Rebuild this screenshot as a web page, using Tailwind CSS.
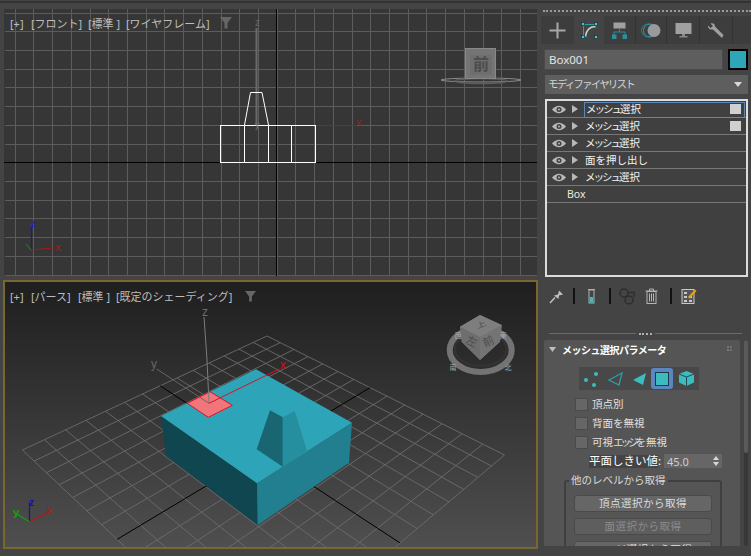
<!DOCTYPE html>
<html lang="ja">
<head>
<meta charset="utf-8">
<script src="https://cdn.jsdelivr.net/npm/@tailwindcss/browser@4"></script>
</head>
<body class="bg-[#444444] overflow-hidden">
<div class="w-[751px] h-[556px] flex flex-col overflow-hidden font-['Noto_Sans','Noto_Sans_CJK_JP',sans-serif]">
  <div class="h-[9px] shrink-0 pt-px"><div class="h-[2px] bg-[#333333]"></div></div>
  <div class="flex flex-1 min-h-0">
    <!-- viewports -->
    <div class="w-[537px] shrink-0 flex flex-col">
      <div class="relative ml-[4px] w-[533px] h-[267px] bg-[#363636] overflow-hidden">
        <svg class="absolute inset-0" width="533" height="267" viewBox="4 9 533 267">
          <g id="frontgrid" stroke="#5c5c5c" stroke-width="1"></g>
          <line x1="4" y1="162.5" x2="537" y2="162.5" stroke="#000"/>
          <line x1="276.5" y1="9" x2="276.5" y2="276" stroke="#000"/>
          <line x1="256.5" y1="28" x2="256.5" y2="125" stroke="#6a6a6a" stroke-width="2"/>
          <line x1="257" y1="125.5" x2="357" y2="125.5" stroke="#8c2326" stroke-width="1"/>
          <g fill="none" stroke="#ffffff" stroke-width="1">
            <rect x="220.5" y="125.5" width="95" height="37"/>
            <line x1="244.5" y1="125" x2="244.5" y2="162"/>
            <line x1="268.5" y1="125" x2="268.5" y2="162"/>
            <line x1="291.5" y1="125" x2="291.5" y2="162"/>
            <polyline points="244.5,125 250.5,92.5 262,92.5 268.5,125"/>
          </g>
          <text x="255" y="26" font-size="10" fill="#666" font-family="Liberation Sans">z</text>
          <text x="356" y="126" font-size="11" fill="#8c2326" font-family="Liberation Sans">x</text>
          <text x="255" y="128" font-size="9" fill="#777" font-family="Liberation Sans">y</text>
          <!-- axis tripod -->
          <line x1="31.5" y1="250" x2="31.5" y2="227" stroke="#1818a8" stroke-width="1.200"/>
          <line x1="31" y1="250" x2="53" y2="248" stroke="#a01c1c" stroke-width="1.200"/>
          <line x1="31" y1="250" x2="26" y2="244" stroke="#1f8a1f"/>
          <text x="30" y="227" font-size="11" font-weight="700" fill="#2424c0" font-family="Liberation Sans">z</text>
          <text x="55" y="251" font-size="11" fill="#a01c1c" font-family="Liberation Sans">x</text>
          <!-- view cube -->
          <ellipse cx="481" cy="80" rx="40" ry="2" fill="none" stroke="#8c8c8c" stroke-width="1"/>
          <ellipse cx="481" cy="81" rx="26" ry="2.5" fill="none" stroke="#5c5c5c" stroke-width="1.5"/>
          <rect x="465.500" y="48.500" width="30" height="30" fill="#757575" stroke="#888"/>
          <rect x="470" y="55" width="22" height="20" fill="#6e6e6e"/>
          <text x="481" y="70" text-anchor="middle" font-size="16" font-weight="700" fill="#4c4c4c" font-family="Noto Sans CJK JP">前</text>
        </svg>
        <div class="absolute left-[6px] top-[8px] h-[12px] flex items-center text-[11px] leading-none text-[#bdbdbd] whitespace-nowrap">
          <span class="w-[21px]">[+]</span>
          <span class="w-[57px]">[フロント]</span>
          <span class="w-[38px]">[標準 ]</span>
          <span class="w-[94px]">[ワイヤフレーム]</span>
          <svg width="12" height="12" viewBox="0 0 12 12"><path d="M0 0H12L7.500 6V11.500H4.500V6Z" fill="#666"/></svg>
        </div>
      </div>
      <div class="relative mt-[4px] ml-[3px] w-[535px] h-[269px] border-2 border-[#796730] bg-linear-to-b from-[#1f1f1f] to-[#4f4f4f] overflow-hidden">
        <svg class="absolute left-0 top-0" width="531" height="265" viewBox="5 282 531 265">
          <g id="persp" fill="none" stroke="#6c6c6c" stroke-width="0.900"></g>
          <g id="perspaxis" fill="none" stroke="#000" stroke-width="1"></g>
          <!-- box -->
          <polygon points="161,416 166,456 257.700,525 257,483.300" fill="#0f4650"/>
          <polygon points="257,483.300 257.700,525 349,462.700 352,422.700" fill="#217f8f"/>
          <polygon points="256,369.300 352,422.700 257,483.300 161,416" fill="#2ea4b8"/>
          <polygon points="282.700,466.700 307.300,451.700 294.700,411 282.700,417.300" fill="#268f9f"/>
          <polygon points="256.700,449.300 270,410.300 282.700,417.300 282.700,466.700" fill="#196572"/>
          <polygon points="187.300,403.300 210,391.700 232.300,405.300 208.300,417.300" fill="#f0767c" stroke="#e0101f" stroke-width="1"/>
          <!-- gizmo -->
          <polyline points="209,403.300 207,360 204,317" fill="none" stroke="#7c7c7c"/>
          <line x1="209" y1="403.300" x2="156.700" y2="369" stroke="#666"/>
          <line x1="209" y1="403.300" x2="279.300" y2="369" stroke="#e0101f"/>
          <text x="202" y="316" font-size="12" fill="#6e6e6e" font-family="Liberation Sans">z</text>
          <text x="151" y="368" font-size="12" fill="#666" font-family="Liberation Sans">y</text>
          <text x="280" y="369" font-size="12" fill="#c8141e" font-family="Liberation Sans">x</text>
          <!-- axis tripod -->
          <line x1="29.500" y1="521.700" x2="29.500" y2="502" stroke="#1212b4" stroke-width="1.200"/>
          <line x1="29.500" y1="521.700" x2="49" y2="511.700" stroke="#b81616" stroke-width="1.200"/>
          <line x1="29.500" y1="521.700" x2="17" y2="514" stroke="#12a012" stroke-width="1.200"/>
          <text x="29" y="506" font-size="10" font-weight="700" fill="#1212b4" font-family="Liberation Sans">z</text>
          <text x="47" y="514" font-size="11" fill="#b81616" font-family="Liberation Sans">x</text>
          <text x="13" y="516" font-size="11" font-weight="700" fill="#12a012" font-family="Liberation Sans">y</text>
          <!-- view cube -->
          <ellipse cx="480.700" cy="350" rx="31" ry="22" fill="none" stroke="#737373" stroke-width="6"/>
          <ellipse cx="480.700" cy="349" rx="26" ry="17" fill="none" stroke="#333" stroke-width="2.500"/>
          <polygon points="480,315 501.700,325 500,341.700 480,360 461.700,341.700 460,326.700" fill="#757575"/>
          <polygon points="460,326.700 480,337 480,360 461.700,341.700" fill="#6e6e6e"/>
          <polygon points="501.700,325 480,337 480,360 500,341.700" fill="#747474"/>
          <polygon points="480,315 501.700,325 480,337 460,326.700" fill="#7e7e7e"/>
          <text transform="translate(482 327) rotate(-20) scale(1 .7)" text-anchor="middle" font-size="10" fill="#4a4a4a" font-family="Noto Sans CJK JP">上</text>
          <text transform="translate(470 345) rotate(25)" text-anchor="middle" font-size="11" fill="#4d4d4d" font-family="Noto Sans CJK JP">左</text>
          <text transform="translate(490 345) rotate(-25)" text-anchor="middle" font-size="11" fill="#4d4d4d" font-family="Noto Sans CJK JP">前</text>
          <g font-size="7" fill="#a8a8a8" font-family="Noto Sans CJK JP" text-anchor="middle">
            <text x="458" y="338">西</text>
            <text x="503" y="338">東</text>
            <text x="453" y="370">南</text>
            <text x="508" y="370">北</text>
          </g>
        </svg>
        <div class="absolute left-[5px] top-[8px] h-[12px] flex items-center text-[11px] leading-none text-[#bdbdbd] whitespace-nowrap">
          <span class="w-[21px]">[+]</span>
          <span class="w-[47px]">[パース]</span>
          <span class="w-[38px]">[標準 ]</span>
          <span class="w-[129px]">[既定のシェーディング]</span>
          <svg width="11" height="11" viewBox="0 0 12 12"><path d="M0 0H12L7.500 6V11.500H4.500V6Z" fill="#666"/></svg>
        </div>
      </div>
    </div>

    <!-- command panel -->
    <div class="w-[214px] shrink-0 flex flex-col">
      <div class="ml-[6px] mt-[1px] h-[2px] border-t-2 border-dotted border-[#9a9a9a]"></div>
      <div class="ml-[4px] mt-[4px] h-[28px] bg-[#3d3d3d] flex">
        <div class="w-[33px] flex items-center justify-center">
          <svg width="17" height="17" viewBox="0 0 17 17"><path d="M8.500 0.500V16.500M0.500 8.500H16.500" stroke="#a8a8a8" stroke-width="2"/></svg>
        </div>
        <div class="w-[30px] bg-[#444444] flex items-center justify-center">
          <svg width="17" height="17" viewBox="0 0 17 17"><path d="M2.500 2.500H14.500M2.500 2.500V14.500M2.500 14.500H6M14.500 2.500V6" stroke="#2f9aa8" fill="none"/><path d="M4.500 14Q6 5 14 4.500" stroke="#d0d0d0" fill="none" stroke-width="1.500"/><g fill="#44c4cc" stroke="#111" stroke-width=".5"><rect x=".5" y=".5" width="3" height="3"/><rect x="13.500" y=".5" width="3" height="3"/><rect x=".5" y="13.500" width="3" height="3"/><rect x="13.500" y="13.500" width="3" height="3"/></g></svg>
        </div>
        <div class="w-[32px] flex items-center justify-center border-r border-[#333333]">
          <svg width="15" height="17" viewBox="0 0 15 17"><rect x="1.500" y="0.500" width="12" height="6" fill="#a0a0a0"/><path d="M7.500 7V10M2 14V10H13V14" fill="none" stroke="#2b8f9c"/><rect x="0" y="12.500" width="4.500" height="4.500" fill="#2b8f9c"/><rect x="10.500" y="12.500" width="4.500" height="4.500" fill="#2b8f9c"/></svg>
        </div>
        <div class="w-[31px] flex items-center justify-center border-r border-[#333333]">
          <svg width="20" height="15" viewBox="0 0 20 15"><circle cx="7" cy="7.500" r="6.500" fill="none" stroke="#2f7f8a"/><circle cx="9" cy="7.500" r="6.500" fill="none" stroke="#2f9aa8"/><circle cx="13" cy="7.500" r="6.500" fill="#9a9a9a"/></svg>
        </div>
        <div class="w-[33px] flex items-center justify-center border-r border-[#333333]">
          <svg width="17" height="15" viewBox="0 0 17 15"><rect x="0.500" y="0" width="16" height="11" fill="#a0a0a0"/><rect x="7" y="11" width="3" height="2" fill="#8a8a8a"/><rect x="4.500" y="13" width="8" height="1.500" fill="#8a8a8a"/></svg>
        </div>
        <div class="w-[33px] flex items-center justify-center border-r border-[#333333]">
          <svg width="18" height="17" viewBox="0 0 18 17"><path d="M1 3.500L3.500 6 6 4 3.500 1.500C5.500 .5 8 1.500 8 4.500L16.500 13 15 16 6 7.500C3 8 .5 6 1 3.500Z" fill="#a0a0a0"/></svg>
        </div>
      </div>
      <div class="ml-[7px] mt-[5px] flex">
        <div class="w-[179px] h-[21px] bg-[#5e5e5e] border border-[#4a4a4a] flex items-center pl-[4px] text-[11.500px] leading-none text-[#e4e4e4]">Box001</div>
        <div class="ml-[5px] w-[20px] h-[21px] bg-[#2ea6ba] border-2 border-black"></div>
      </div>
      <div class="ml-[8px] mt-[5px] w-[203px] h-[19px] bg-[#5e5e5e] flex items-center pl-[3px] pr-[6px] justify-between text-[10.500px] leading-none text-[#d4d4d4]">
        <span class="tracking-[-1.800px]">モディファイヤリスト</span>
        <svg width="8" height="5" viewBox="0 0 8 5"><path d="M0 0H8L4 5Z" fill="#d8d8d8"/></svg>
      </div>
      <div class="ml-[8px] mt-[5px] w-[203px] h-[178px] border-2 border-[#dcdcdc] bg-[#404040] text-[10.500px] leading-none text-[#f2f2f2]">
        <div class="relative h-[17px] border-b border-[#777777] flex items-center">
          <svg class="ml-[5px]" width="14" height="9" viewBox="0 0 14 9"><path d="M0 4.500Q7 -3 14 4.500Q7 12 0 4.500Z" fill="#b8b8b8"/><circle cx="7" cy="4.500" r="2.500" fill="#404040"/><circle cx="7" cy="4.500" r="1" fill="#b8b8b8"/></svg>
          <svg class="ml-[6px]" width="6" height="8" viewBox="0 0 6 8"><path d="M0 0L6 4L0 8Z" fill="#b8b8b8"/></svg>
          <span class="ml-[6px] h-[16px] flex-1 mr-[1px] mt-[1px] border border-[#5b87b5] flex items-center pl-px"><span class="tracking-[-2px]">メッシュ</span>選択</span>
          <span class="absolute left-[183px] top-[3px] w-[11px] h-[10px] bg-[#d0d0d0]"></span>
        </div>
        <div class="relative h-[17px] border-b border-[#777777] flex items-center">
          <svg class="ml-[5px]" width="14" height="9" viewBox="0 0 14 9"><path d="M0 4.500Q7 -3 14 4.500Q7 12 0 4.500Z" fill="#b8b8b8"/><circle cx="7" cy="4.500" r="2.500" fill="#404040"/><circle cx="7" cy="4.500" r="1" fill="#b8b8b8"/></svg>
          <svg class="ml-[6px]" width="6" height="8" viewBox="0 0 6 8"><path d="M0 0L6 4L0 8Z" fill="#b8b8b8"/></svg>
          <span class="ml-[7px]"><span class="tracking-[-2px]">メッシュ</span>選択</span>
          <span class="absolute left-[183px] top-[3px] w-[11px] h-[10px] bg-[#d0d0d0]"></span>
        </div>
        <div class="h-[17px] border-b border-[#777777] flex items-center">
          <svg class="ml-[5px]" width="14" height="9" viewBox="0 0 14 9"><path d="M0 4.500Q7 -3 14 4.500Q7 12 0 4.500Z" fill="#b8b8b8"/><circle cx="7" cy="4.500" r="2.500" fill="#404040"/><circle cx="7" cy="4.500" r="1" fill="#b8b8b8"/></svg>
          <svg class="ml-[6px]" width="6" height="8" viewBox="0 0 6 8"><path d="M0 0L6 4L0 8Z" fill="#b8b8b8"/></svg>
          <span class="ml-[7px]"><span class="tracking-[-2px]">メッシュ</span>選択</span>
        </div>
        <div class="h-[17px] border-b border-[#777777] flex items-center">
          <svg class="ml-[5px]" width="14" height="9" viewBox="0 0 14 9"><path d="M0 4.500Q7 -3 14 4.500Q7 12 0 4.500Z" fill="#b8b8b8"/><circle cx="7" cy="4.500" r="2.500" fill="#404040"/><circle cx="7" cy="4.500" r="1" fill="#b8b8b8"/></svg>
          <svg class="ml-[6px]" width="6" height="8" viewBox="0 0 6 8"><path d="M0 0L6 4L0 8Z" fill="#b8b8b8"/></svg>
          <span class="ml-[7px]">面を押し出し</span>
        </div>
        <div class="h-[17px] border-b border-[#777777] flex items-center">
          <svg class="ml-[5px]" width="14" height="9" viewBox="0 0 14 9"><path d="M0 4.500Q7 -3 14 4.500Q7 12 0 4.500Z" fill="#b8b8b8"/><circle cx="7" cy="4.500" r="2.500" fill="#404040"/><circle cx="7" cy="4.500" r="1" fill="#b8b8b8"/></svg>
          <svg class="ml-[6px]" width="6" height="8" viewBox="0 0 6 8"><path d="M0 0L6 4L0 8Z" fill="#b8b8b8"/></svg>
          <span class="ml-[7px]"><span class="tracking-[-2px]">メッシュ</span>選択</span>
        </div>
        <div class="h-[17px] border-b border-[#777777] flex items-center pl-[20px] text-[#f0ecd8]">Box</div>
      </div>
      <!-- toolbar -->
      <div class="ml-[12px] mt-[11px] h-[16px] flex items-center">
        <svg class="w-[15px]" width="15" height="15" viewBox="0 0 15 15"><path d="M1 14L6 8.500" stroke="#c0c0c0" stroke-width="1.500"/><path d="M5 6.500L9 5.500 10 1.500 14 5.500 10 6.500 9.500 10Z" fill="#c0c0c0"/></svg>
        <div class="ml-[9px] w-[2px] h-[16px] bg-[#111111]"></div>
        <svg class="ml-[13px]" width="7" height="15" viewBox="0 0 7 15"><rect x="1" y="1" width="5" height="13" fill="none" stroke="#b0b0b0"/><rect x="2" y="8" width="3" height="5.500" fill="#3dbcc0"/><path d="M0 .5H7" stroke="#b0b0b0"/></svg>
        <div class="ml-[14px] w-[2px] h-[16px] bg-[#111111]"></div>
        <svg class="ml-[8px]" width="16" height="17" viewBox="0 0 16 17"><g fill="none" stroke="#2e2e2e" stroke-width="1.500"><circle cx="5" cy="5" r="4"/><circle cx="10" cy="12" r="4"/><path d="M9 4.500H15V9"/></g></svg>
        <svg class="ml-[10px]" width="13" height="16" viewBox="0 0 13 16"><g fill="none" stroke="#b4b4b4"><path d="M0.500 3H12.500M4.500 3V1H8.500V3"/><rect x="2" y="3.500" width="9" height="12"/><path d="M4.500 5.500V13.500M6.500 5.500V13.500M8.500 5.500V13.500"/></g></svg>
        <div class="ml-[12px] w-[2px] h-[16px] bg-[#111111]"></div>
        <svg class="ml-[9px]" width="16" height="16" viewBox="0 0 16 16"><rect x="1" y="1.500" width="12" height="14" fill="#555" stroke="#c8c8c8"/><g fill="#c8c8c8"><rect x="3" y="4" width="3" height="2"/><rect x="3" y="8" width="3" height="2"/><rect x="3" y="12" width="3" height="2"/><rect x="8" y="8" width="3" height="2"/><rect x="8" y="12" width="3" height="2"/></g><path d="M7 9L14 1.500 15.500 3 8.500 10.500Z" fill="#e8a020"/></svg>
      </div>
      <!-- divider -->
      <div class="ml-[12px] w-[194px] mt-[28px] h-[3px] flex items-center gap-[3px]">
        <div class="w-[87px] h-px bg-[#6a6a6a]"></div>
        <div class="w-[13px] h-[2px] border-t-2 border-dotted border-[#b0b0b0]"></div>
        <div class="w-[87px] h-px bg-[#6a6a6a]"></div>
      </div>
      <!-- rollout + scrollbar -->
      <div class="ml-[7px] mt-[5px] flex gap-[4px] h-[206px]">
        <div class="relative w-[196px] bg-[#555555] rounded-t-[2px] overflow-hidden">
          <div class="flex items-center h-[19px] pl-[5px]">
            <svg width="7" height="5" viewBox="0 0 7 5"><path d="M0 0H7L3.500 5Z" fill="#bdbdbd"/></svg>
            <span class="ml-[6px] text-[10px] font-bold tracking-[-0.500px] leading-none text-white">メッシュ選択パラメータ</span>
          </div>
          <div class="absolute right-[8px] top-[6px] w-[5px] h-[5px] border-t-2 border-b-2 border-dotted border-[#777777]"></div>
          <div class="ml-[35px] mt-[8px] w-[120px] h-[23px] bg-[#484848] flex items-center">
            <div class="w-[24px] flex justify-center"><svg width="16" height="16" viewBox="0 0 16 16" fill="#3dbcc0"><circle cx="3" cy="9" r="2"/><circle cx="13" cy="3" r="2"/><circle cx="11" cy="14" r="2"/></svg></div>
            <div class="w-[24px] flex justify-center"><svg width="15" height="14" viewBox="0 0 15 14"><path d="M1 8L14 1 11 13Z" fill="none" stroke="#2f9aa8" stroke-width="1.300"/></svg></div>
            <div class="w-[24px] flex justify-center"><svg width="15" height="14" viewBox="0 0 15 14"><path d="M1 8L14 1 11 13Z" fill="#3dbcc0"/></svg></div>
            <div class="w-[22px] h-[21px] bg-[#5b87c0] rounded-[3px] flex items-center justify-center"><div class="w-[14px] h-[14px] bg-[#3dbcc0] border border-[#1e3a40]"></div></div>
            <div class="w-[26px] flex justify-center"><svg width="15" height="15" viewBox="0 0 15 15"><path d="M7.500 0L15 3V11.500L7.500 15 0 11.500V3Z" fill="#3dbcc0"/><path d="M0 3L7.500 6 15 3M7.500 6V15" fill="none" stroke="#264a50"/></svg></div>
          </div>
          <div class="pl-[31px] mt-[8px] flex flex-col gap-[6px] text-[10.500px] leading-none text-[#e0e0e0]">
            <div class="flex items-center gap-[4px] h-[13px]"><span class="w-[13px] h-[13px] bg-[#666666] border border-[#4a4a4a]"></span>頂点別</div>
            <div class="flex items-center gap-[4px] h-[13px]"><span class="w-[13px] h-[13px] bg-[#666666] border border-[#4a4a4a]"></span>背面を無視</div>
            <div class="flex items-center gap-[4px] h-[13px]"><span class="w-[13px] h-[13px] bg-[#666666] border border-[#4a4a4a]"></span><span>可視<span class="tracking-[-3px]">エッジ</span>を無視</span></div>
          </div>
          <div class="flex items-center ml-[45px] mt-[5px] h-[14px]">
            <span class="w-[69px] h-[13px] bg-[#444444] flex items-center text-[11.500px] leading-none text-white whitespace-nowrap">平面しきい値:</span>
            <div class="ml-[6px] w-[58px] h-[14px] bg-[#666666] flex items-center justify-between pl-[3px] pr-[3px] text-[11px] leading-none text-[#cfcfcf]">45.0
              <svg width="6" height="10" viewBox="0 0 6 10" fill="#d8d8d8"><path d="M0 4L3 0 6 4ZM0 6L3 10 6 6Z"/></svg>
            </div>
          </div>
          <div class="relative ml-[20px] mt-[12px] w-[158px] h-[90px] border-2 border-[#3f3f3f] rounded-[3px] px-[8px] pt-[13px] flex flex-col gap-[6px] text-[10.500px] leading-none text-[#dcdcdc]">
            <span class="absolute left-[3px] top-[-7px] bg-[#555555] px-[2px] whitespace-nowrap">他のレベルから取得</span>
            <div class="shrink-0 h-[17px] bg-[#666666] border border-[#4a4a4a] rounded-[3px] flex items-center justify-center tracking-[0.500px]">頂点選択から取得</div>
            <div class="shrink-0 h-[17px] bg-[#5e5e5e] border border-[#4a4a4a] rounded-[3px] flex items-center justify-center tracking-[0.500px] text-[#8c8c8c]">面選択から取得</div>
            <div class="shrink-0 h-[17px] bg-[#666666] border border-[#4a4a4a] rounded-[3px] flex items-center justify-center tracking-[0.500px]">エッジ選択から取得</div>
          </div>
        </div>
        <div class="w-[4px] bg-[#383838] rounded-[2px] overflow-hidden"><div class="h-[113px] bg-[#5a5a5a] rounded-[2px]"></div></div>
      </div>
    </div>
  </div>
</div>
<script>
(function(){
  var NS='http://www.w3.org/2000/svg';
  function line(g,a,b,c,d){var l=document.createElementNS(NS,'line');l.setAttribute('x1',a);l.setAttribute('y1',b);l.setAttribute('x2',c);l.setAttribute('y2',d);g.appendChild(l);}
  var f=document.getElementById('frontgrid'),k,p;
  for(k=-14;k<=14;k++){p=Math.round(276.7+k*18.72)+.5;if(p>4&&p<537)line(f,p,9,p,276);}
  for(k=-8;k<=7;k++){p=Math.round(162.3+k*18.72)+.5;if(p>9&&p<276)line(f,5,p,537,p);}
  var x0=267,y0=336,x1=504.5,y1=455,x2=252.6,y2=667.3,x3=22.4,y3=450;
  var dx1=x1-x2,dx2=x3-x2,sx=x0-x1+x2-x3,dy1=y1-y2,dy2=y3-y2,sy=y0-y1+y2-y3;
  var den=dx1*dy2-dx2*dy1,g=(sx*dy2-dx2*sy)/den,h=(dx1*sy-sx*dy1)/den;
  var a=x1-x0+g*x1,b=x3-x0+h*x3,c=x0,d=y1-y0+g*y1,e=y3-y0+h*y3,ff=y0;
  function P(u,v){var w=g*u+h*v+1;return [(a*u+b*v+c)/w,(d*u+e*v+ff)/w];}
  var G=document.getElementById('persp'),A=document.getElementById('perspaxis'),N=14,i,s,t;
  for(i=0;i<=N;i++){
    var q=i/N,tg=(i===N/2)?A:G;
    s=P(q,0);t=P(q,1);line(tg,s[0],s[1],t[0],t[1]);
    s=P(0,q);t=P(1,q);line(tg,s[0],s[1],t[0],t[1]);
  }
})();
</script>
</body>
</html>
